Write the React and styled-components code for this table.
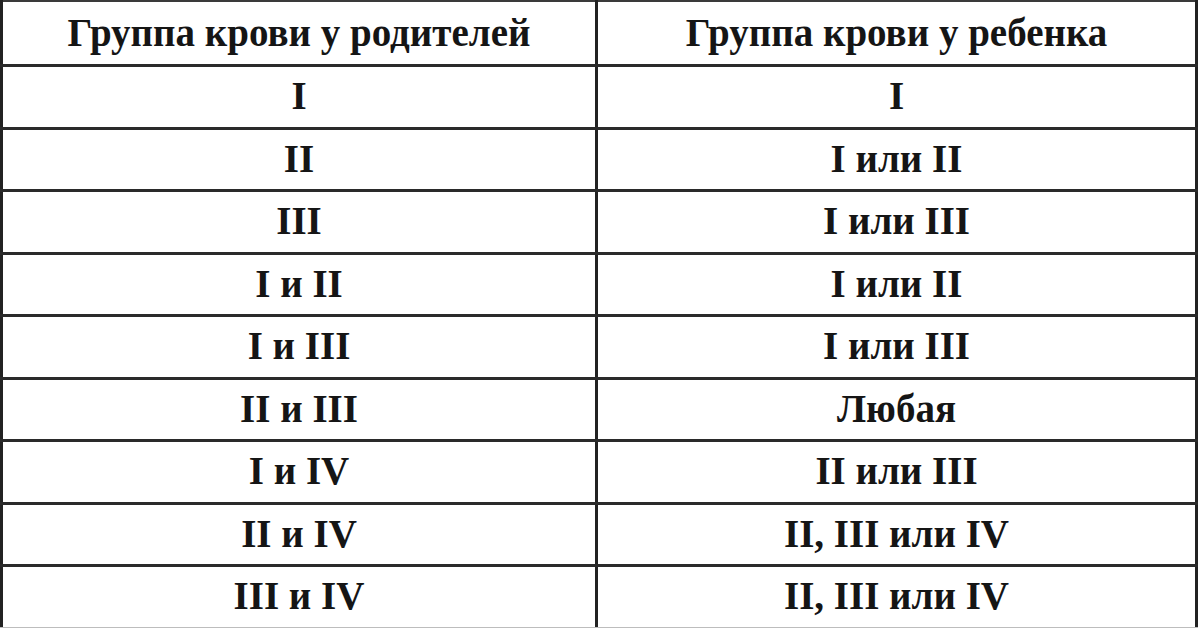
import React from 'react'
import styled, { createGlobalStyle } from 'styled-components'

const GlobalStyle = createGlobalStyle`
  html, body {
    margin: 0;
    padding: 0;
    background: #ffffff;
  }
  body {
    width: 1200px;
    height: 628px;
    overflow: hidden;
  }
`

const Table = styled.table`
  width: 1198px;
  border-collapse: collapse;
  font-family: 'Liberation Serif', 'Times New Roman', serif;
  font-size: 39px;
  font-weight: 700;
  color: #151515;
  table-layout: fixed;
  border-top: 2px solid #3a3a3a;
  border-left: 3px solid #222222;
  border-right: 3px solid #222222;
`

const HeadCell = styled.th`
  height: 60px;
  padding: 0 0 2px;
  text-align: center;
  vertical-align: middle;
  font-weight: 700;
  border-bottom: 3px solid #2a2a2a;
  border-right: ${props => (props.$last ? 'none' : '3px solid #222222')};
`

const Cell = styled.td`
  height: 57.5px;
  padding: 0 0 2px;
  text-align: center;
  vertical-align: middle;
  border-bottom: 3px solid ${props => (props.$lastRow ? '#bdbdbd' : '#2a2a2a')};
  border-right: ${props => (props.$last ? 'none' : '3px solid #222222')};
`

const rows = [
  ['I', 'I'],
  ['II', 'I или II'],
  ['III', 'I или III'],
  ['I и II', 'I или II'],
  ['I и III', 'I или III'],
  ['II и III', 'Любая'],
  ['I и IV', 'II или III'],
  ['II и IV', 'II, III или IV'],
  ['III и IV', 'II, III или IV'],
]

const App = () => {
  return (
    <>
      <GlobalStyle />
      <Table>
        <colgroup>
          <col style={{ width: '595px' }} />
          <col />
        </colgroup>
        <thead>
          <tr>
            <HeadCell>Группа крови у родителей</HeadCell>
            <HeadCell $last>Группа крови у ребенка</HeadCell>
          </tr>
        </thead>
        <tbody>
          {rows.map((r, i) => (
            <tr key={i}>
              <Cell $lastRow={i === rows.length - 1}>{r[0]}</Cell>
              <Cell $last $lastRow={i === rows.length - 1}>
                {r[1]}
              </Cell>
            </tr>
          ))}
        </tbody>
      </Table>
    </>
  )
}

export default App
